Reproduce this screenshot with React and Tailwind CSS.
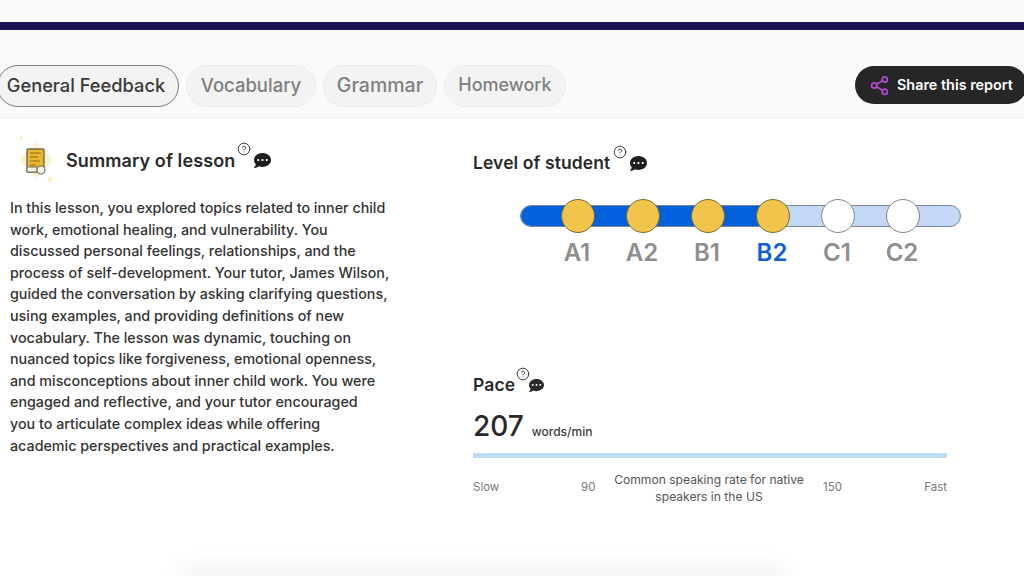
import { CircleHelp, Share2 } from "lucide-react";
import { FaCommentDots } from "react-icons/fa";

const tabs = [
  { label: "Vocabulary", style: "w-[130px] text-[18.5px]" },
  { label: "Grammar", style: "w-[114px] text-[19.5px]" },
  { label: "Homework", style: "w-[122px] text-[18px]" },
];

const levels = [
  { name: "A1", done: true },
  { name: "A2", done: true },
  { name: "B1", done: true },
  { name: "B2", done: true, current: true },
  { name: "C1", done: false },
  { name: "C2", done: false },
];

const summary = [
  "In this lesson, you explored topics related to inner child",
  "work, emotional healing, and vulnerability. You",
  "discussed personal feelings, relationships, and the",
  "process of self-development. Your tutor, James Wilson,",
  "guided the conversation by asking clarifying questions,",
  "using examples, and providing definitions of new",
  "vocabulary. The lesson was dynamic, touching on",
  "nuanced topics like forgiveness, emotional openness,",
  "and misconceptions about inner child work. You were",
  "engaged and reflective, and your tutor encouraged",
  "you to articulate complex ideas while offering",
  "academic perspectives and practical examples.",
];

function SummaryIcon() {
  return (
    <svg width="44" height="52" viewBox="0 0 44 52" className="shrink-0">
      <path d="M21 8 L38 26 L21 44 L4 26 Z" fill="#fdf3cf" />
      <path d="M6 2 l2 2 -2 2 -2 -2Z M35 42 l3 3 -3 3 -3 -3Z" fill="#fbeebc" />
      <rect x="12" y="15" width="17" height="23" rx="1" fill="#e9b92f" stroke="#6f6a58" strokeWidth="1.4" />
      <path d="M15 19h11M15 23h8M15 27h10M15 31h6" stroke="#8a6a12" strokeWidth="1.2" />
      <rect x="12" y="33" width="10" height="5" fill="#f7f3e3" stroke="#6f6a58" strokeWidth="1" />
      <circle cx="26" cy="36" r="4" fill="#f7f3e3" stroke="#6f6a58" strokeWidth="1.1" />
    </svg>
  );
}

function SectionTitle({ children, size = "text-[17.5px]" }) {
  return <h2 className={`${size} font-semibold text-[#2a2a2a] tracking-[0.1px] whitespace-nowrap`}>{children}</h2>;
}

export default function App() {
  return (
    <div className="w-[1024px] h-[576px] overflow-hidden bg-white flex flex-col text-[#2f2f2f] font-['Inter','Liberation_Sans',sans-serif]">
      <header className="bg-[#fafafa] border-b border-[#ececec] pt-[22px] h-[118px] shrink-0">
        <div className="h-2 bg-[#1b1255]" />
        <div className="mt-[35px] flex items-center justify-between">
          <nav className="flex gap-[7px] -ml-[3px]">
            <button className="w-[182px] h-[42px] rounded-full bg-[#f3f3f3] border border-[#7c7c7c] text-[18.3px] leading-[24px] font-[450] text-[#3a3a3a] pr-[4px] pb-[3px] whitespace-nowrap">
              General Feedback
            </button>
            {tabs.map((tab) => (
              <button key={tab.label} className={`${tab.style} h-[42px] rounded-full bg-[#f3f3f3] border border-[#ececec] leading-[24px] font-[450] text-[#808080] pb-[3px]`}>
                {tab.label}
              </button>
            ))}
          </nav>
          <button className="w-[172px] -mr-[3px] mb-[2px] h-[38px] rounded-full bg-[#262626] text-white flex items-center pl-[14px] gap-[7px] text-[14.4px] font-semibold whitespace-nowrap">
            <Share2 size={21} strokeWidth={2} className="text-[#b24bd1]" />
            Share this report
          </button>
        </div>
      </header>

      <main className="flex-1 flex">
        <section className="w-[473px] shrink-0 pl-[10px]">
          <div className="flex items-center h-[52px] mt-[16px] pl-[5px]">
            <SummaryIcon />
            <div className="ml-[7px]"><SectionTitle size="text-[18px]">Summary of lesson</SectionTitle></div>
            <CircleHelp size={14} strokeWidth={1.6} className="ml-[2px] mb-[22px] text-[#333]" />
            <FaCommentDots size={17} className="ml-[3px] text-[#1d1d1d]" />
          </div>
          <p className="mt-[11px] text-[14.3px] font-[450] leading-[21.6px] text-[#333] whitespace-nowrap">
            {summary.map((line) => (
              <span key={line} className="block">{line}</span>
            ))}
          </p>
        </section>

        <section className="flex-1">
          <div className="flex items-center h-[24px] mt-[33px]">
            <SectionTitle>Level of student</SectionTitle>
            <CircleHelp size={14} strokeWidth={1.6} className="ml-[3px] mb-[22px] text-[#333]" />
            <FaCommentDots size={17} className="ml-[3px] text-[#1d1d1d]" />
          </div>

          <div className="ml-[47px] mt-[30px] w-[441px]">
            <div className="relative h-[22px] rounded-full bg-[#c2d8f5] border border-[#7d8795] flex items-center pl-[40px] gap-[31px]">
              <div className="absolute left-0 top-0 bottom-0 w-[250px] rounded-l-full bg-[#0360dc]" />
              {levels.map((level) => (
                <div
                  key={level.name}
                  className={`relative w-[34px] h-[34px] shrink-0 rounded-full border ${level.done ? "bg-[#f1c54b] border-[#7c6a32]" : "bg-white border-[#7d8795]"}`}
                />
              ))}
            </div>
            <div className="flex pl-[40px] gap-[31px] mt-[11px]">
              {levels.map((level) => (
                <span
                  key={level.name}
                  className={`w-[34px] shrink-0 flex justify-center text-[24px] leading-[30px] font-semibold ${level.current ? "text-[#0f60d6]" : "text-[#8e8e8e]"}`}
                >
                  {level.name}
                </span>
              ))}
            </div>
          </div>

          <div className="flex items-center h-[24px] mt-[105px]">
            <SectionTitle>Pace</SectionTitle>
            <CircleHelp size={14} strokeWidth={1.6} className="ml-[1px] mb-[23px] text-[#333]" />
            <FaCommentDots size={15} className="-ml-[1px] text-[#2a2a2a]" />
          </div>

          <div className="flex items-baseline mt-[9px] h-[40px]">
            <span className="text-[28px] leading-[40px] font-medium text-[#2a2a2a]">207</span>
            <span className="ml-[8px] text-[12px] font-[450] text-[#3a3a3a]">words/min</span>
          </div>

          <div className="mt-[7px] w-[474px] h-[5px] bg-[#bfdaf7]" />

          <div className="mt-[13px] w-[474px] flex items-center text-[11.5px] text-[#777]">
            <span className="w-[108px]">Slow</span>
            <span className="w-[28px]">90</span>
            <span className="w-[200px] text-center text-[12.1px] leading-[17px] text-[#555] whitespace-nowrap">
              Common speaking rate for native<br />speakers in the US
            </span>
            <span className="ml-[14px]">150</span>
            <span className="ml-auto">Fast</span>
          </div>
        </section>
      </main>

      <div className="ml-[190px] mr-[250px] h-0 shadow-[0_0_22px_10px_rgba(0,0,0,0.06)]" />
    </div>
  );
}
